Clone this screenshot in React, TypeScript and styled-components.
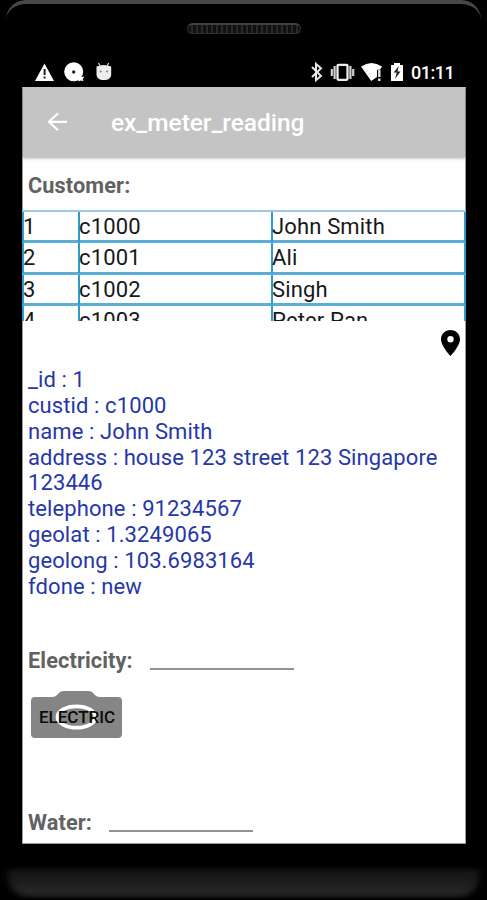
import React from "react";
import styled, { createGlobalStyle } from "styled-components";

const GlobalStyle = createGlobalStyle`
  * { box-sizing: border-box; }
  body { margin: 0; background: #000; font-family: Roboto, sans-serif; }
`;

const Phone = styled.div`
  width: 487px;
  height: 900px;
  display: flex;
  flex-direction: column;
  background: #000;
  overflow: hidden;
`;

const TopBezel = styled.div`
  height: 57px;
  margin: 0 6px;
  padding-top: 19px;
  border-top: 4px solid #484848;
  border-radius: 20px 20px 0 0;
  display: flex;
  justify-content: center;
`;

const Speaker = styled.div`
  width: 114px;
  height: 11px;
  margin-left: 1px;
  border: 1px solid #303030;
  border-top: 2px solid #404040;
  border-radius: 6px;
  background: repeating-linear-gradient(90deg, #111 0 3px, #282828 3px 5px);
`;

const StatusBar = styled.div`
  height: 30px;
  display: flex;
  justify-content: space-between;
  padding: 4px 32px 0 34px;
  color: #fff;
`;

const StatusGroup = styled.div`
  display: flex;
  align-items: flex-start;
`;

const Clock = styled.span`
  width: 44px;
  font-size: 18px;
  font-weight: 500;
  line-height: 24px;
  margin-left: 6px;
  letter-spacing: -0.5px;
`;

const Screen = styled.main`
  width: 444px;
  height: 757px;
  margin-left: 22px;
  border: 1px solid #999;
  border-top: 0;
  background: #fefefe;
  display: flex;
  flex-direction: column;
`;

const AppBar = styled.header`
  height: 70px;
  flex: none;
  display: flex;
  align-items: center;
  padding-left: 24px;
  background: #c4c4c4;
  box-shadow: 0 1px 3px rgba(0, 0, 0, 0.35);
  color: #fff;
`;

const Title = styled.h1`
  margin: 2px 0 0 43px;
  font-size: 24.5px;
  font-weight: 500;
  line-height: 30px;
  letter-spacing: -0.05px;
`;

const Label = styled.span`
  color: #626262;
  font-size: 21.7px;
  font-weight: 700;
  line-height: 26px;
  letter-spacing: 0.12px;
`;

const Heading = styled.div`
  height: 53px;
  flex: none;
  padding: 16px 5px 0;
`;

const Table = styled.div`
  height: 111px;
  flex: none;
  margin: 0 -1px;
  overflow: hidden;
  border-top: 2px solid #9ec9e6;
`;

const TableRow = styled.div`
  height: 31.4px;
  display: grid;
  grid-template-columns: 56px 193px 195px;
  border-bottom: 3px solid #5aaed6;
`;

const Cell = styled.div`
  border-left: 2px solid #2f9bd0;
  color: #181818;
  font-size: 22px;
  line-height: 30px;
  letter-spacing: 0.15px;
  white-space: nowrap;
  &:last-child { border-right: 2px solid #2f9bd0; }
`;

const CellText = styled.span`
  margin-left: -1px;
`;

const LocationRow = styled.div`
  height: 46px;
  flex: none;
  display: flex;
  justify-content: flex-end;
  padding: 9px 5px 0 0;
`;

const Details = styled.div`
  height: 281px;
  flex: none;
  padding-left: 5px;
  color: #2638a6;
  font-size: 22px;
  line-height: 25.85px;
`;

const DetailLine = styled.div`
  letter-spacing: 0.1px;
`;

const Field = styled.div`
  display: flex;
  height: 27px;
  padding-left: 5px;
  flex: none;
`;

const Underline = styled.div`
  width: 144px;
  height: 22px;
  margin-left: 17px;
  border-bottom: 2px solid #929292;
`;

const CameraButton = styled.button`
  width: 92px;
  height: 47px;
  margin: 16px 0 72px 8px;
  padding: 0;
  border: 0;
  background: none;
  display: grid;
  flex: none;
  > * { grid-area: 1 / 1; }
`;

const CameraText = styled.span`
  z-index: 1;
  color: #0a0a0a;
  font: 500 17px/52px Roboto, sans-serif;
  text-align: center;
`;

const BottomBezel = styled.div`
  height: 35px;
  margin: 21px 2px 0;
  border-radius: 8px 8px 28px 28px;
  background: linear-gradient(#050505, #151515 20%, #1b1b1b 45%, #262626 75%, #202020 90%, #000);
  box-shadow: inset 5px 0 6px #000, inset -5px 0 6px #000;
`;

const customers = [
  ["1", "c1000", "John Smith"],
  ["2", "c1001", "Ali"],
  ["3", "c1002", "Singh"],
  ["4", "c1003", "Peter Pan"],
];

const details = [
  "_id : 1",
  "custid : c1000",
  "name : John Smith",
  "address : house 123 street 123 Singapore 123446",
  "telephone : 91234567",
  "geolat : 1.3249065",
  "geolong : 103.6983164",
  "fdone : new",
];

const NotificationIcons = () => (
  <svg width="80" height="24" viewBox="34 61 80 24" fill="#fff">
    <path d="M44.5 63.5 54 81H35Z" />
    <path d="M43.6 69h2v6h-2zm0 7.5h2v2h-2z" fill="#222" />
    <circle cx="73.7" cy="71.8" r="9.5" />
    <path d="m78 77 2-2 1.5 2 3-.5-1.8 2.4.8 2.3-2.5-.7-2.5 1Z" />
    <circle cx="73.7" cy="72" r="1.7" fill="#222" />
    <path d="M96.5 66.5q7.3-3 14.7 0V74c0 4-2.5 6-7.3 6s-7.4-2-7.4-6Z" fill="#eee" />
    <path d="m98.5 63 2.2 4m8-4-2.2 4" stroke="#ddd" strokeWidth="1.2" />
    <circle cx="100.7" cy="71.5" r="1.1" fill="#888" />
    <circle cx="107" cy="71.5" r="1.1" fill="#888" />
  </svg>
);

const SystemIcons = () => (
  <svg width="95" height="24" viewBox="310 61 95 24" fill="#fff">
    <path d="m312 67 9 9-5 4.2V64l5 4.2-9 8.8" fill="none" stroke="#e8e8e8" strokeWidth="2" />
    <rect x="337.5" y="64.8" width="10" height="15" rx="1" fill="none" stroke="#eee" strokeWidth="2.3" />
    <path d="M334.6 66v13m15.8-13v13m-18.6-10v7m21.4-7v7" stroke="#d0d0d0" strokeWidth="2.2" />
    <path d="M361 66.5q10.5-7 21 0l-2 3.2h-3V77l-5.8 4Z" />
    <path d="M378 70h2.5v7H378zm0 8.5h2.5V81H378z" fill="#ddd" />
    <path d="M391 65h3v-2h6v2h3v16h-12Z" />
    <path d="m398.7 66-5 6.5h3L395 79l5.5-7.5h-3Z" fill="#222" />
  </svg>
);

const BackIcon = () => (
  <svg width="21" height="21" viewBox="0 0 21 21" fill="none" stroke="#fff" strokeWidth="2.2">
    <path d="M20 9.8H2m9-8.5L2 9.8l9 8.5" />
  </svg>
);

const PinIcon = () => (
  <svg width="19" height="26" viewBox="0 0 19 26">
    <path fill="#000" fillRule="evenodd" d="M9.5 0C4.2 0 0 4.1 0 9.2c0 6.7 9.5 16.8 9.5 16.8S19 15.9 19 9.2C19 4.1 14.8 0 9.5 0Zm0 6a3.2 3.2 0 1 1 0 6.4 3.2 3.2 0 0 1 0-6.4Z" />
  </svg>
);

const CameraShape = () => (
  <svg width="92" height="47" viewBox="0 0 92 47">
    <path d="M4 6h18q3 0 5-3 2-3 6-3h24q4 0 6 3t6 3h18q4 0 4 4v33q0 4-4 4H4q-4 0-4-4V10q0-4 4-4Z" fill="#858585" />
    <ellipse cx="45.5" cy="26" rx="19" ry="10.7" fill="none" stroke="#fff" strokeWidth="3.8" />
  </svg>
);

export default function App() {
  return (
    <>
      <GlobalStyle />
      <Phone>
        <TopBezel><Speaker /></TopBezel>
        <StatusBar>
          <StatusGroup><NotificationIcons /></StatusGroup>
          <StatusGroup><SystemIcons /><Clock>01:11</Clock></StatusGroup>
        </StatusBar>
        <Screen>
          <AppBar><BackIcon /><Title>ex_meter_reading</Title></AppBar>
          <Heading><Label>Customer:</Label></Heading>
          <Table>
            {customers.map((row) => (
              <TableRow key={row[0]}>
                {row.map((value) => <Cell key={value}><CellText>{value}</CellText></Cell>)}
              </TableRow>
            ))}
          </Table>
          <LocationRow><PinIcon /></LocationRow>
          <Details>
            {details.map((line) => <DetailLine key={line}>{line}</DetailLine>)}
          </Details>
          <Field><Label>Electricity:</Label><Underline /></Field>
          <CameraButton><CameraShape /><CameraText>ELECTRIC</CameraText></CameraButton>
          <Field><Label>Water:</Label><Underline /></Field>
        </Screen>
        <BottomBezel />
      </Phone>
    </>
  );
}
